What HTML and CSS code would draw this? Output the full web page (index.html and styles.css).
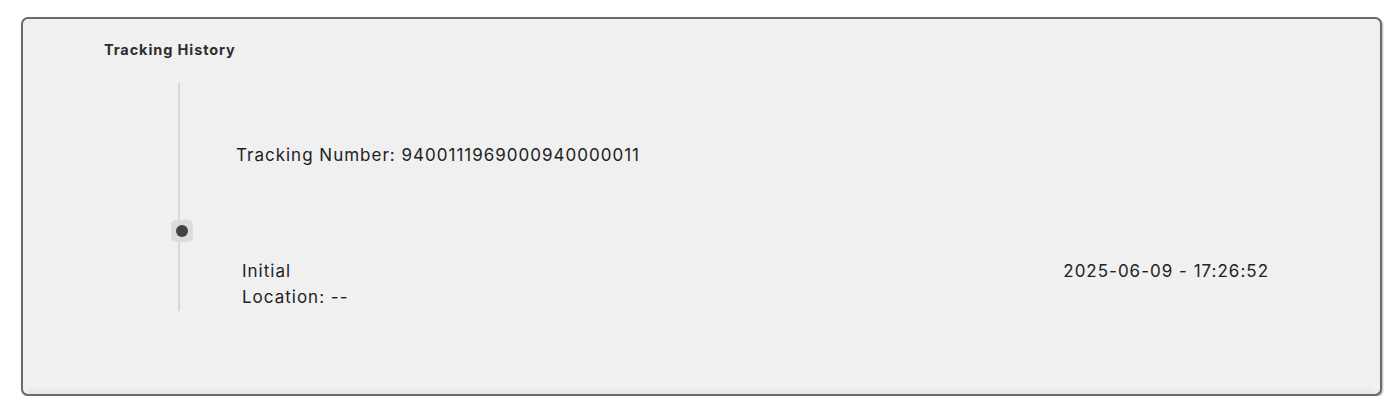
FILE: index.html
```html
<!DOCTYPE html>
<html lang="en">
<head>
<meta charset="utf-8">
<title>Tracking History</title>
<link rel="stylesheet" href="styles.css">
</head>
<body>
<section class="card">
  <h2 class="title">Tracking History</h2>
  <div class="history">
    <div class="rail">
      <span class="seg seg-top"></span>
      <span class="knob"><span class="dot"></span></span>
      <span class="seg seg-bottom"></span>
    </div>
    <div class="entries">
      <div class="tracking">Tracking Number: 9400111969000940000011</div>
      <div class="event">
        <div class="event-info">
          <div>Initial</div>
          <div>Location: --</div>
        </div>
        <div class="event-time">2025-06-09 - 17:26:52</div>
      </div>
    </div>
  </div>
  <div class="foot"></div>
</section>
</body>
</html>
```

FILE: styles.css
```css
html, body {
  margin: 0;
  padding: 0;
  background: #ffffff;
}

body {
  font-family: Inter, "Noto Sans", "Liberation Sans", sans-serif;
  color: #222222;
}

.card {
  box-sizing: border-box;
  margin: 17px 18px 0 21px;
  height: 379px;
  border: 2px solid #6a6a6a;
  border-radius: 7px;
  background: #f0f0f0;
  box-shadow: 1px 1px 2px rgba(0, 0, 0, 0.3);
  display: flex;
  flex-direction: column;
}

.title {
  margin: 0;
  padding: 22px 0 0 81px;
  font-size: 14.5px;
  line-height: 18px;
  font-weight: 700;
  letter-spacing: 0.9px;
  color: #2e2e2e;
}

.history {
  display: flex;
  margin: 24px 0 0 148px;
}

.rail {
  width: 22px;
  display: flex;
  flex-direction: column;
  align-items: flex-start;
}

.seg {
  display: block;
  width: 2px;
  margin-left: 7px;
  background: #d8d8d8;
}

.seg-top {
  height: 137px;
}

.seg-bottom {
  height: 69px;
}

.knob {
  width: 22px;
  height: 22px;
  border-radius: 5px;
  background: #dcdcdc;
  display: flex;
  align-items: center;
  justify-content: center;
}

.dot {
  width: 12px;
  height: 12px;
  border-radius: 50%;
  background: #434343;
}

.entries {
  flex: 1;
}

.tracking {
  margin: 62px 0 0 43px;
  font-size: 17px;
  line-height: 20px;
  letter-spacing: 1px;
}

.event {
  display: flex;
  justify-content: space-between;
  margin-top: 93px;
  padding: 0 111px 0 49px;
  font-size: 17px;
  line-height: 26px;
  letter-spacing: 1px;
}

.foot {
  margin: auto 6px 0 5px;
  height: 6px;
  background: linear-gradient(#ededed, #e7e7e7);
}
```
